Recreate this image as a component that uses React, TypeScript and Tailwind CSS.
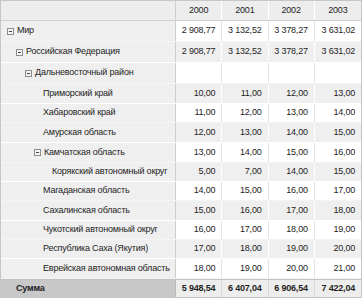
import React from "react";

type Row = {
  label: string;
  level: number;
  toggle?: boolean;
  h: string;
  vals: string[];
};

const rows: Row[] = [
  { label: "Мир", level: 0, toggle: true, h: "h-[21px]", vals: ["2 908,77", "3 132,52", "3 378,27", "3 631,02"] },
  { label: "Российская Федерация", level: 1, toggle: true, h: "h-[21px]", vals: ["2 908,77", "3 132,52", "3 378,27", "3 631,02"] },
  { label: "Дальневосточный район", level: 2, toggle: true, h: "h-[21px]", vals: ["", "", "", ""] },
  { label: "Приморский край", level: 3, h: "h-[20px]", vals: ["10,00", "11,00", "12,00", "13,00"] },
  { label: "Хабаровский край", level: 3, h: "h-[19px]", vals: ["11,00", "12,00", "13,00", "14,00"] },
  { label: "Амурская область", level: 3, h: "h-[20px]", vals: ["12,00", "13,00", "14,00", "15,00"] },
  { label: "Камчатская область", level: 3, toggle: true, h: "h-[20px]", vals: ["13,00", "14,00", "15,00", "16,00"] },
  { label: "Корякский автономный округ", level: 4, h: "h-[19px]", vals: ["5,00", "7,00", "14,00", "15,00"] },
  { label: "Магаданская область", level: 3, h: "h-[19px]", vals: ["14,00", "15,00", "16,00", "17,00"] },
  { label: "Сахалинская область", level: 3, h: "h-[20px]", vals: ["15,00", "16,00", "17,00", "18,00"] },
  { label: "Чукотский автономный округ", level: 3, h: "h-[19px]", vals: ["16,00", "17,00", "18,00", "19,00"] },
  { label: "Республика Саха (Якутия)", level: 3, h: "h-[19px]", vals: ["17,00", "18,00", "19,00", "20,00"] },
  { label: "Еврейская автономная область", level: 3, h: "h-[20px]", vals: ["18,00", "19,00", "20,00", "21,00"] },
];

const togglePad: Record<number, string> = {
  0: "pl-[6px]",
  1: "pl-[15px]",
  2: "pl-[24px]",
  3: "pl-[33px]",
};

const leafPad: Record<number, string> = {
  3: "pl-[42px]",
  4: "pl-[51px]",
};

function Toggle() {
  return (
    <span className="relative mr-[3px] inline-block h-[7px] w-[7px] shrink-0 border border-[#8c8c8c] bg-[#f4f4f4]">
      <span className="absolute left-[1px] top-[2px] h-px w-[3px] bg-[#444]" />
    </span>
  );
}

export default function App() {
  const font = { fontFamily: '"Liberation Sans", Arial, sans-serif' };
  return (
    <div
      className="w-[362px] h-[298px] overflow-hidden border border-[#c6c6c6] bg-white text-[9px] tracking-[-0.2px] text-[#1e1e1e]"
      style={font}
    >
      {/* header */}
      <div className="grid h-[20px] grid-cols-[175px_repeat(4,1fr)] border-b border-[#cfcfcf] bg-[#ededed]">
        <div className="border-r border-[#cdcdcd]" />
        {["2000", "2001", "2002", "2003"].map((y, i) => (
          <div
            key={y}
            className={`flex items-center justify-center ${i < 3 ? "border-r border-white" : ""}`}
          >
            {y}
          </div>
        ))}
      </div>
      {rows.map((r, idx) => {
        const gray = idx % 2 === 1;
        return (
          <div
            key={r.label}
            className={`grid grid-cols-[175px_repeat(4,1fr)] border-b ${r.h} ${
              gray ? "border-white bg-[#efefef]" : "border-[#f4f4f4] bg-white"
            }`}
          >
            <div
              className={`flex items-center whitespace-nowrap border-r border-[#cdcdcd] bg-[#efefef] ${
                r.toggle ? togglePad[r.level] : leafPad[r.level]
              }`}
            >
              {r.toggle && <Toggle />}
              <span>{r.label}</span>
            </div>
            {r.vals.map((v, i) => (
              <div
                key={i}
                className={`flex items-center justify-end pr-[6px] ${
                  i < 3 ? (gray ? "border-r border-white" : "border-r border-[#e4e4e4]") : ""
                }`}
              >
                {v}
              </div>
            ))}
          </div>
        );
      })}
      {/* total */}
      <div className="grid h-[19px] grid-cols-[175px_repeat(4,1fr)] border-t border-[#c2c2c2] bg-[#ededed] font-bold">
        <div className="flex items-center border-r border-[#b8b8b8] bg-[#c8c8c8] pl-[15px]">Сумма</div>
        {["5 948,54", "6 407,04", "6 906,54", "7 422,04"].map((v, i) => (
          <div
            key={v}
            className={`flex items-center justify-end pr-[6px] ${i < 3 ? "border-r border-[#d8d8d8]" : ""}`}
          >
            {v}
          </div>
        ))}
      </div>
    </div>
  );
}
